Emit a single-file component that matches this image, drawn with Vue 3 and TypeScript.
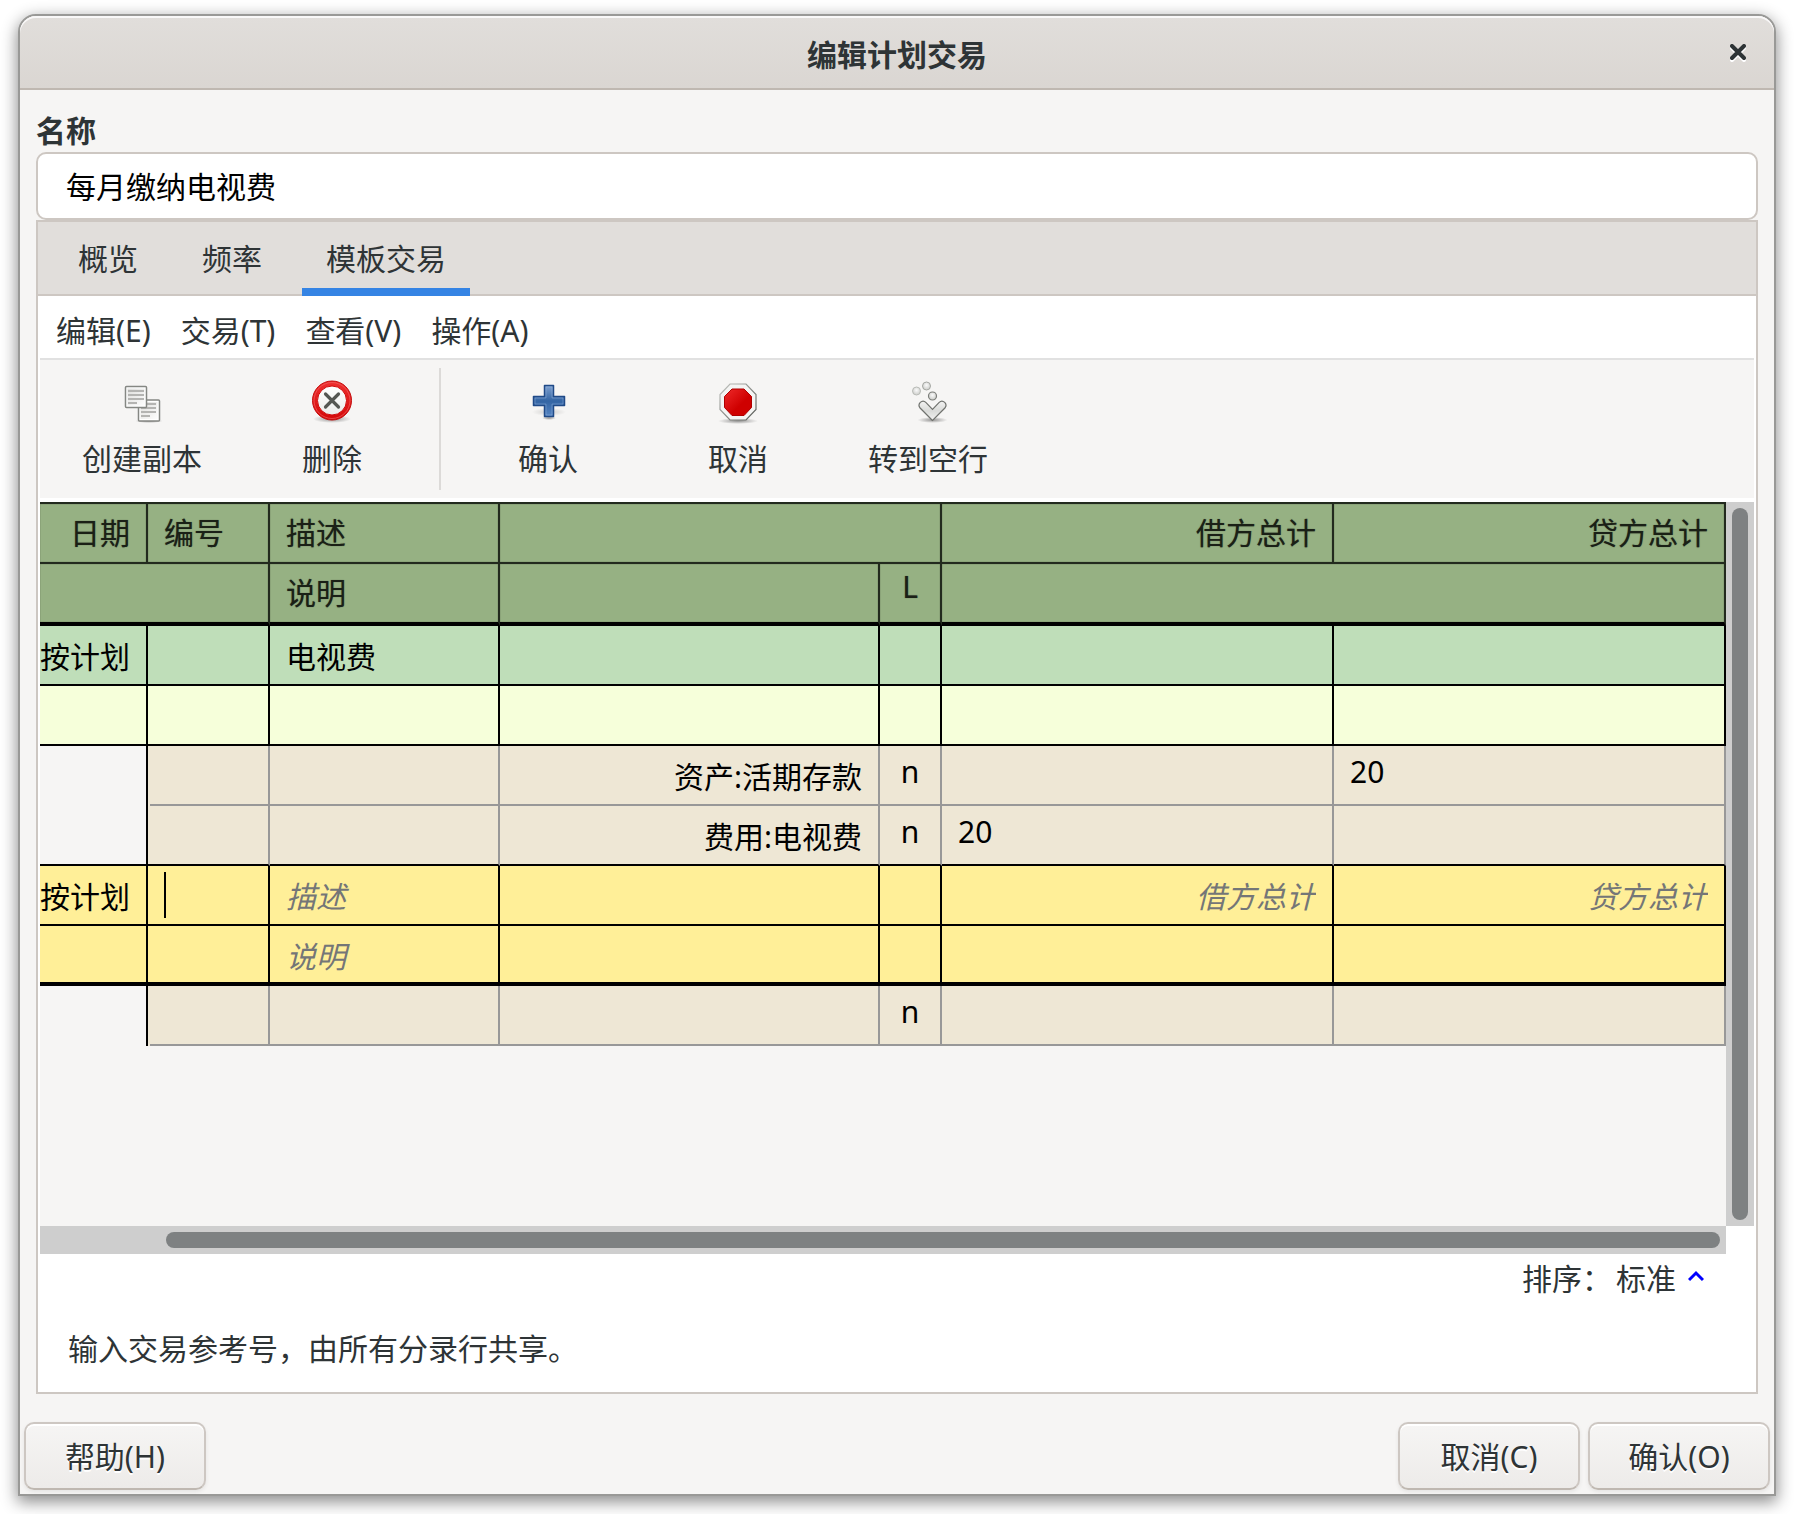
<script setup lang="ts">
import { ref } from 'vue'

interface Tab {
  id: string
  label: string
}

interface Tool {
  icon: 'copy' | 'delete' | 'add' | 'stop' | 'jump'
  label: string
  separated?: boolean
}

interface Split {
  account: string
  reconcile: string
  debit: string
  credit: string
}

const name = ref('每月缴纳电视费')
const activeTab = ref('template')

const tabs: Tab[] = [
  { id: 'overview', label: '概览' },
  { id: 'frequency', label: '频率' },
  { id: 'template', label: '模板交易' },
]

const menus: string[] = ['编辑(E)', '交易(T)', '查看(V)', '操作(A)']

const tools: Tool[] = [
  { icon: 'copy', label: '创建副本' },
  { icon: 'delete', label: '删除' },
  { icon: 'add', label: '确认', separated: true },
  { icon: 'stop', label: '取消' },
  { icon: 'jump', label: '转到空行' },
]

const splits: Split[] = [
  { account: '资产:活期存款', reconcile: 'n', debit: '', credit: '20' },
  { account: '费用:电视费', reconcile: 'n', debit: '20', credit: '' },
]
</script>

<template>
  <div class="desktop">
    <main class="window">
      <header class="titlebar">
        <h1>编辑计划交易</h1>
        <button class="close" type="button" aria-label="关闭">
          <svg width="16" height="18" viewBox="0 0 16 18">
            <path d="M2 4l12 12M14 4L2 16" stroke="#fff" stroke-width="4" stroke-linecap="round" />
            <path d="M2 2l12 12M14 2L2 14" stroke="#2e3436" stroke-width="4" stroke-linecap="round" />
          </svg>
        </button>
      </header>

      <div class="body">
        <label class="name-label" for="sx-name">名称</label>
        <input id="sx-name" v-model="name" class="name-input" type="text" />

        <section class="notebook">
          <nav class="tabs">
            <button
              v-for="tab in tabs"
              :key="tab.id"
              type="button"
              class="tab"
              :class="{ active: tab.id === activeTab }"
              @click="activeTab = tab.id"
            >
              {{ tab.label }}
            </button>
          </nav>

          <div class="page">
            <div class="menubar">
              <button v-for="menu in menus" :key="menu" type="button">{{ menu }}</button>
            </div>

            <div class="toolbar">
              <template v-for="tool in tools" :key="tool.icon">
                <span v-if="tool.separated" class="separator"></span>
                <button type="button" class="tool">
                  <svg v-if="tool.icon === 'copy'" width="48" height="48" viewBox="0 0 48 48">
                    <defs>
                      <linearGradient id="paper" x1="0" y1="0" x2="1" y2="1">
                        <stop offset="0" stop-color="#dededc" />
                        <stop offset="1" stop-color="#fdfdfd" />
                      </linearGradient>
                      <radialGradient id="shade">
                        <stop offset="0" stop-color="#000" stop-opacity=".4" />
                        <stop offset="1" stop-color="#000" stop-opacity="0" />
                      </radialGradient>
                    </defs>
                    <ellipse cx="31" cy="43" rx="14" ry="2" fill="url(#shade)" />
                    <rect x="20.500" y="22" width="21" height="21" rx="1" fill="#fff" stroke="#858783" stroke-width="1.5" />
                    <rect x="22.500" y="24" width="17" height="17" fill="url(#paper)" />
                    <path d="M23 26h15M23 30h15M23 34h15M23 38h9" stroke="#b4b4b2" stroke-width="2" />
                    <rect x="7.500" y="8.500" width="21" height="21" rx="1" fill="#fff" stroke="#858783" stroke-width="1.5" />
                    <rect x="9.500" y="10.500" width="17" height="17" fill="url(#paper)" />
                    <path d="M10 13h16M10 17h16M10 21h16M10 25h9" stroke="#b4b4b2" stroke-width="2" />
                  </svg>
                  <svg v-else-if="tool.icon === 'delete'" width="48" height="48" viewBox="0 0 48 48">
                    <defs>
                      <linearGradient id="ring" x1="0" y1="0" x2="0" y2="1">
                        <stop offset="0" stop-color="#ef2f2f" />
                        <stop offset="1" stop-color="#d40808" />
                      </linearGradient>
                      <linearGradient id="disc" x1="0" y1="0" x2="0" y2="1">
                        <stop offset="0" stop-color="#fff" />
                        <stop offset="1" stop-color="#ececea" />
                      </linearGradient>
                    </defs>
                    <ellipse cx="24" cy="41" rx="19" ry="4" fill="url(#shade)" />
                    <circle cx="24" cy="22.500" r="19.500" fill="url(#ring)" stroke="#c40d0d" />
                    <circle cx="24" cy="22.500" r="18" fill="none" stroke="#f26a6a" stroke-opacity=".6" />
                    <circle cx="24" cy="22.500" r="14.500" fill="url(#disc)" stroke="#cf0a0a" />
                    <path d="M17.500 16l13 13M30.500 16l-13 13" stroke="#555753" stroke-width="3.200" stroke-linecap="round" />
                  </svg>
                  <svg v-else-if="tool.icon === 'add'" width="48" height="48" viewBox="0 0 48 48">
                    <defs>
                      <linearGradient id="plus" x1="0" y1="0" x2="0" y2="1">
                        <stop offset="0" stop-color="#7ea0cf" />
                        <stop offset=".5" stop-color="#3465a4" />
                        <stop offset="1" stop-color="#5584c2" />
                      </linearGradient>
                    </defs>
                    <ellipse cx="25" cy="34" rx="17" ry="4" fill="url(#shade)" opacity=".4" />
                    <ellipse cx="25" cy="40" rx="7" ry="2" fill="url(#shade)" />
                    <path
                      d="M20.500 7.500h9v11h11v9h-11v11h-9v-11h-11v-9h11z"
                      fill="url(#plus)"
                      stroke="#204a87"
                      stroke-width="1.500"
                      stroke-linejoin="round"
                    />
                    <path d="M22 9h6v11h11v6h-11v11h-6v-11h-11v-6h11z" fill="none" stroke="#9dbbe2" stroke-opacity=".4" />
                  </svg>
                  <svg v-else-if="tool.icon === 'stop'" width="48" height="48" viewBox="0 0 48 48">
                    <defs>
                      <linearGradient id="rim" x1="0" y1="0" x2="1" y2="1">
                        <stop offset="0" stop-color="#c4c6c2" />
                        <stop offset="1" stop-color="#555753" />
                      </linearGradient>
                      <linearGradient id="red" x1="0" y1="0" x2="1" y2="1">
                        <stop offset="0" stop-color="#ee2a2a" />
                        <stop offset=".6" stop-color="#cf0000" />
                        <stop offset="1" stop-color="#cf0000" />
                      </linearGradient>
                    </defs>
                    <ellipse cx="24" cy="43" rx="20" ry="3" fill="url(#shade)" />
                    <path
                      d="M16 6h16l10 10.500v15l-10 10.500h-16l-10-10.500v-15z"
                      fill="#f4f4f3"
                      stroke="url(#rim)"
                      stroke-width="1.200"
                    />
                    <path
                      d="M18 11h12l7.500 7.500v11l-7.500 8h-12l-7.500-8v-11z"
                      fill="url(#red)"
                      stroke="#b00000"
                    />
                  </svg>
                  <svg v-else width="48" height="48" viewBox="0 0 48 48">
                    <defs>
                      <radialGradient id="ball" cx=".5" cy=".4">
                        <stop offset="0" stop-color="#fafafa" />
                        <stop offset="1" stop-color="#d3d4d1" />
                      </radialGradient>
                      <linearGradient id="chevron" x1="0" y1="0" x2="0" y2="1">
                        <stop offset="0" stop-color="#f3f3f2" />
                        <stop offset=".5" stop-color="#d9dad8" />
                        <stop offset="1" stop-color="#f3f3f2" />
                      </linearGradient>
                    </defs>
                    <ellipse cx="28.500" cy="42" rx="15" ry="3" fill="url(#shade)" />
                    <circle cx="12.500" cy="13" r="4" fill="url(#ball)" stroke="#b9bbb7" />
                    <circle cx="22.500" cy="8" r="4" fill="url(#ball)" stroke="#a5a7a3" />
                    <circle cx="28.500" cy="18" r="4" fill="url(#ball)" stroke="#7b7d79" stroke-width="1.200" />
                    <path
                      d="M28.500 42.500L16.100 30c-1.500-1.800-1.300-4 .2-5.600 1.600-1.500 4-1.500 5.500 0L28.500 31.300l6.700-6.900c1.500-1.500 3.900-1.500 5.500 0 1.500 1.600 1.700 3.800.2 5.600z"
                      fill="url(#chevron)"
                      stroke="#70726e"
                      stroke-width="1.200"
                    />
                  </svg>
                  <span>{{ tool.label }}</span>
                </button>
              </template>
            </div>

            <div class="register">
              <div class="sheet">
                <table>
                  <colgroup>
                    <col class="c-date" />
                    <col class="c-num" />
                    <col class="c-desc" />
                    <col />
                    <col class="c-rec" />
                    <col class="c-amount" />
                    <col class="c-amount" />
                  </colgroup>
                  <thead>
                    <tr class="first">
                      <th class="right" scope="col">日期</th>
                      <th scope="col">编号</th>
                      <th scope="col">描述</th>
                      <th colspan="2"></th>
                      <th class="right" scope="col">借方总计</th>
                      <th class="right" scope="col">贷方总计</th>
                    </tr>
                    <tr class="second">
                      <th colspan="2"></th>
                      <th scope="col">说明</th>
                      <th></th>
                      <th class="center latin" scope="col">L</th>
                      <th colspan="2"></th>
                    </tr>
                  </thead>
                  <tbody>
                    <tr class="primary">
                      <td class="right">按计划</td>
                      <td></td>
                      <td>电视费</td>
                      <td></td>
                      <td></td>
                      <td></td>
                      <td></td>
                    </tr>
                    <tr class="secondary">
                      <td v-for="n in 7" :key="n"></td>
                    </tr>
                    <tr v-for="split in splits" :key="split.account" class="split">
                      <td class="blank"></td>
                      <td class="lead"></td>
                      <td></td>
                      <td class="right">{{ split.account }}</td>
                      <td class="center latin">{{ split.reconcile }}</td>
                      <td class="latin">{{ split.debit }}</td>
                      <td class="latin">{{ split.credit }}</td>
                    </tr>
                    <tr class="current">
                      <td class="right">按计划</td>
                      <td class="editing"><span class="caret"></span></td>
                      <td><input type="text" placeholder="描述" aria-label="描述" /></td>
                      <td></td>
                      <td></td>
                      <td><input class="right" type="text" placeholder="借方总计" aria-label="借方总计" /></td>
                      <td><input class="right" type="text" placeholder="贷方总计" aria-label="贷方总计" /></td>
                    </tr>
                    <tr class="current divider">
                      <td></td>
                      <td></td>
                      <td><input type="text" placeholder="说明" aria-label="说明" /></td>
                      <td></td>
                      <td></td>
                      <td></td>
                      <td></td>
                    </tr>
                    <tr class="split">
                      <td class="blank"></td>
                      <td class="lead"></td>
                      <td></td>
                      <td></td>
                      <td class="center latin">n</td>
                      <td></td>
                      <td></td>
                    </tr>
                  </tbody>
                </table>
              </div>
              <div class="scroll-v"><span></span></div>
              <div class="scroll-h"><span></span></div>
            </div>

            <div class="sort">
              <span>排序：</span>
              <span>标准</span>
              <svg width="16" height="18" viewBox="0 0 16 18">
                <path d="M1 10l7-7 7 7" fill="none" stroke="#00f" stroke-width="3" />
              </svg>
            </div>
            <p class="status">输入交易参考号，由所有分录行共享。</p>
          </div>
        </section>
      </div>

      <footer class="actions">
        <button type="button">帮助(H)</button>
        <span class="spacer"></span>
        <button type="button">取消(C)</button>
        <button type="button">确认(O)</button>
      </footer>
    </main>
  </div>
</template>

<style>
body {
  background: #fff;
}
</style>

<style scoped>
.desktop {
  box-sizing: border-box;
  display: flex;
  min-height: 100vh;
  padding: 14px 18px 18px;
  color: #2e3436;
  font: 30px/40px "Noto Sans", "Noto Sans CJK SC", sans-serif;
}

button,
input {
  box-sizing: border-box;
  margin: 0;
  padding: 0;
  border: 0;
  background: none;
  color: inherit;
  font: inherit;
}

.window {
  box-sizing: border-box;
  display: flex;
  flex: 1;
  flex-direction: column;
  min-width: 0;
  border: 2px solid #999997;
  border-radius: 18px 18px 0 0;
  background: #f6f5f4;
  box-shadow: 0 5px 16px 1px rgba(0, 0, 0, 0.45);
}

.titlebar {
  box-sizing: border-box;
  display: grid;
  grid-template-columns: 1fr auto 1fr;
  align-items: center;
  height: 74px;
  padding: 0 28px;
  border-bottom: 2px solid #bfb8b1;
  border-radius: 16px 16px 0 0;
  background: linear-gradient(#e1dedb, #dad6d2);
  box-shadow: inset 0 2px #f9f8f8;
}

h1 {
  grid-column: 2;
  margin: 6px 0 0;
  font-size: 30px;
  line-height: 40px;
}

.close {
  justify-self: end;
  height: 18px;
  margin-top: 2px;
  line-height: 0;
}

.body {
  display: flex;
  flex: 1;
  flex-direction: column;
  padding: 21px 16px 0;
}

.name-label {
  height: 41px;
  font-weight: bold;
}

.name-input {
  width: 100%;
  height: 68px;
  padding: 0 28px 2px;
  border: 2px solid #cdc7c2;
  border-radius: 10px;
  background: #fff;
  color: #000;
}

.notebook {
  display: flex;
  flex: 1;
  flex-direction: column;
  border: 2px solid #cdc7c2;
  background: #fff;
}

.tabs {
  display: flex;
  gap: 16px;
  height: 72px;
  padding: 0 16px;
  border-bottom: 2px solid #cdc7c2;
  background: #e1dedb;
}

.tab {
  height: 74px;
  padding: 0 24px;
  border-top: 8px solid transparent;
  border-bottom: 8px solid transparent;
}

.tab.active {
  border-bottom-color: #3584e4;
}

.page {
  display: flex;
  flex: 1;
  flex-direction: column;
  padding: 0 2px;
}

.menubar {
  display: flex;
  gap: 30px;
  height: 62px;
  padding: 0 16px;
  border-bottom: 2px solid #e1e1e1;
}

.menubar button {
  padding-top: 8px;
}

.toolbar {
  display: flex;
  box-sizing: border-box;
  height: 138px;
  padding: 0 7px;
  background: #f6f5f4;
}

.tool {
  display: flex;
  flex-direction: column;
  align-items: center;
  gap: 13px;
  width: 190px;
  padding-top: 18px;
}

.separator {
  width: 2px;
  margin: 8px 12px;
  background: #dcdad8;
}

.register {
  display: grid;
  flex: 1;
  grid-template-columns: minmax(0, 1fr) 28px;
  grid-template-rows: 1fr 28px;
  margin-top: 4px;
}

.sheet {
  overflow: hidden;
  background: #f6f5f4;
}

.scroll-v,
.scroll-h {
  display: flex;
  padding: 6px;
  background: #cecece;
}

.scroll-h {
  padding-left: 126px;
}

.scroll-v span,
.scroll-h span {
  flex: 1;
  border-radius: 8px;
  background: #7e8182;
}

table {
  width: 100%;
  border-spacing: 0;
  table-layout: fixed;
  color: #000;
}

.c-date {
  width: 108px;
}

.c-num {
  width: 122px;
}

.c-desc {
  width: 230px;
}

.c-rec {
  width: 62px;
}

.c-amount {
  width: 392px;
}

th,
td {
  box-sizing: border-box;
  height: 60px;
  padding: 4px 16px 0;
  border: solid #000;
  border-width: 0 2px 2px 0;
  font-weight: normal;
  text-align: left;
  white-space: nowrap;
}

th {
  padding-top: 0;
  border-color: #222a1e;
  background: #96b183;
  box-shadow: inset 0 0 1px rgba(0, 0, 0, 0.7);
  color: #1a2016;
  text-shadow: 0 0 1px rgba(26, 32, 22, 0.6);
}

.first th {
  height: 62px;
  border-top-width: 2px;
}

.second th {
  height: 62px;
  border-bottom: 4px solid #000;
}

.right {
  text-align: right;
}

td:first-child {
  padding-left: 0;
}

.center {
  padding-right: 0;
  padding-left: 0;
  text-align: center;
}

td.latin {
  padding-top: 0;
  padding-bottom: 6px;
}

th.latin {
  padding-bottom: 12px;
}

.primary td {
  background: #bfdeb9;
}

.secondary td {
  background: #f6ffda;
}

.split td {
  border-color: #989898;
  background: #eee7d5;
}

.split td.blank {
  border-right-color: #000;
  border-bottom: 0;
  background: #f6f5f4;
}

.split td.lead {
  border-bottom: 0;
  background: linear-gradient(#989898, #989898) 2px 100% / 100% 2px no-repeat #eee7d5;
}

.split:has(+ .current) td,
.split:has(+ .current) td.blank {
  border-bottom: 2px solid #000;
}

.split:has(+ .current) td.lead {
  border-bottom: 2px solid #000;
  background: #eee7d5;
}

.current td {
  background: #ffef98;
}

.current td.editing {
  padding-top: 0;
}

.divider td {
  padding-top: 6px;
  border-bottom-width: 4px;
}

.current input {
  display: block;
  width: 100%;
  height: 40px;
}

.current input::placeholder {
  color: #747677;
  font-style: italic;
  opacity: 1;
}

.caret {
  display: block;
  width: 2px;
  height: 46px;
  background: #000;
}

.sort {
  display: flex;
  align-items: center;
  justify-content: flex-end;
  height: 50px;
  padding-right: 50px;
}

.sort span + span {
  margin: 0 12px 0 4px;
}

.status {
  margin: 25px 28px 23px;
}

.actions {
  display: flex;
  gap: 8px;
  padding: 28px 4px 4px;
}

.actions button {
  min-width: 182px;
  height: 68px;
  padding-top: 2px;
  border: 2px solid #cdc7c2;
  border-bottom-color: #bfb8b1;
  border-radius: 10px;
  background: linear-gradient(#f6f5f4, #edebe9);
  box-shadow: inset 0 2px #fff, 0 2px 4px rgba(0, 0, 0, 0.07);
  text-shadow: 0 2px #fff;
}

.spacer {
  flex: 1;
}
</style>
